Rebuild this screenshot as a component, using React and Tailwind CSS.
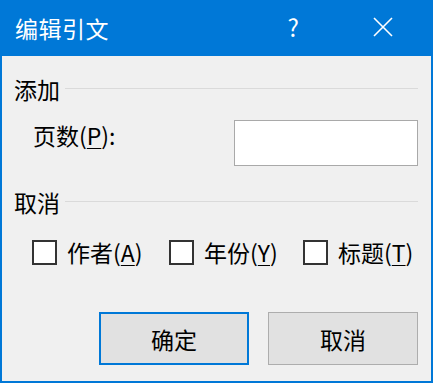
import React from "react";

const font = { fontFamily: '"Microsoft YaHei UI", "Noto Sans CJK SC", "Noto Sans", sans-serif' };

function Checkbox({ label, mnemonic, className = "" }) {
  return (
    <label className={"flex items-center " + className}>
      <span className="w-[25px] h-[25px] border-2 border-[#333333] bg-white shrink-0" />
      <span className="ml-[10px] text-[23px] leading-[30px] text-black">
        {label}(<span className="underline underline-offset-[3px] decoration-1">{mnemonic}</span>)
      </span>
    </label>
  );
}

function Section({ title }) {
  return (
    <div className="flex items-center h-[30px]">
      <span className="text-[23px] leading-[30px] text-black">{title}</span>
      <div className="flex-1 h-px bg-[#dadada] ml-[5px] -mt-[2px]" />
    </div>
  );
}

export default function App() {
  return (
    <div
      className="w-[433px] h-[383px] bg-[#0078d7] flex flex-col px-[2px] pb-[2px] select-none"
      style={font}
    >
      <div className="h-[56px] flex items-center text-white shrink-0">
        <span className="ml-[13px] text-[23px] leading-[30px] tracking-[0.5px]">编辑引文</span>
        <div className="flex-1" />
        <span className="text-[24px] leading-[30px] mr-[74px] -mt-[2px]">?</span>
        <svg width="20" height="20" viewBox="0 0 20 20" className="mr-[38px] -mt-[2px]">
          <path d="M1 1 L19 19 M19 1 L1 19" stroke="white" strokeWidth="1.6" fill="none" />
        </svg>
      </div>
      <div className="flex-1 bg-[#f0f0f0] flex flex-col pl-[12px] pr-[13px]">
        <div className="mt-[18px]">
          <Section title="添加" />
        </div>
        <div className="flex items-start mt-[16px] h-[46px]">
          <span className="ml-[19px] text-[23px] leading-[30px] text-black">
            页数(<span className="underline underline-offset-[3px] decoration-1">P</span>):
          </span>
          <div className="flex-1" />
          <div className="w-[184px] h-[46px] bg-white border border-[#a9a9a9]" />
        </div>
        <div className="mt-[21px]">
          <Section title="取消" />
        </div>
        <div className="flex items-center mt-[20px] h-[30px]">
          <Checkbox label="作者" mnemonic="A" className="ml-[18px] w-[137px]" />
          <Checkbox label="年份" mnemonic="Y" className="w-[134px]" />
          <Checkbox label="标题" mnemonic="T" />
        </div>
        <div className="flex justify-end gap-[19px] mt-[45px]">
          <button className="w-[150px] h-[53px] bg-[#e1e1e1] border-2 border-[#0078d7] text-[23px] leading-[30px] text-black">
            确定
          </button>
          <button className="w-[150px] h-[53px] bg-[#e1e1e1] border border-[#adadad] text-[23px] leading-[30px] text-black">
            取消
          </button>
        </div>
      </div>
    </div>
  );
}
